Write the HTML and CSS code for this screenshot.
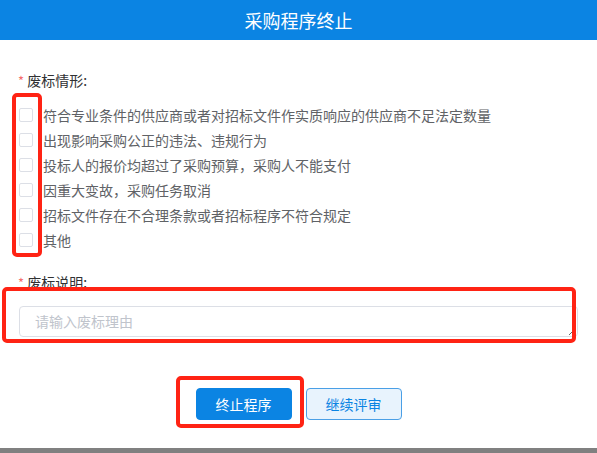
FILE: index.html
```html
<!DOCTYPE html>
<html lang="zh-CN">
<head>
    <meta charset="UTF-8">
    <meta name="viewport" content="width=device-width, initial-scale=1.0">
    <title>采购程序终止</title>
    <link rel="stylesheet" href="styles.css">
</head>
<body>

    <div class="dialog">
        <div class="dialog-header">采购程序终止</div>

        <form class="dialog-body" id="terminar">
            <div class="form-label"><span class="required">*</span> 废标情形:</div>
            <div class="check-group">
                <label class="check-row"><span class="check-box"></span>符合专业条件的供应商或者对招标文件作实质响应的供应商不足法定数量</label>
                <label class="check-row"><span class="check-box"></span>出现影响采购公正的违法、违规行为</label>
                <label class="check-row"><span class="check-box"></span>投标人的报价均超过了采购预算，采购人不能支付</label>
                <label class="check-row"><span class="check-box"></span>因重大变故，采购任务取消</label>
                <label class="check-row"><span class="check-box"></span>招标文件存在不合理条款或者招标程序不符合规定</label>
                <label class="check-row"><span class="check-box"></span>其他</label>
            </div>

            <div class="form-label second"><span class="required">*</span> 废标说明:</div>
            <textarea class="reason" placeholder="请输入废标理由"></textarea>

            <div class="buttons">
                <button type="button" class="btn btn-primary">终止程序</button>
                <button type="button" class="btn btn-plain">继续评审</button>
            </div>
        </form>

        <!-- marcas rojas -->
        <div class="mark mark-checks"></div>
        <div class="mark mark-text"></div>
        <div class="mark mark-btn"></div>
    </div>

</body>
</html>
```

FILE: styles.css
```css
body {
    margin: 0;
    background-color: #808080;
    font-family: "Noto Sans CJK SC", "Liberation Sans", sans-serif;
}
.dialog {
    position: relative;
    height: 448px;
    background-color: #fff;
    box-shadow: 0 1px 3px rgba(0, 0, 0, 0.4);
}
.dialog-header {
    height: 40px;
    line-height: 40px;
    text-align: center;
    background-color: #0b84e3;
    color: #fff;
    font-size: 18px;
}
.dialog-body {
    padding: 30px 0 0 18px;
    margin: 0;
}
.form-label {
    height: 20px;
    line-height: 20px;
    font-size: 14px;
    color: #303133;
}
.form-label.second {
    margin-top: 20px;
}
.required {
    color: #f56c6c;
    font-size: 13px;
}
.check-group {
    display: flex;
    flex-direction: column;
    margin-top: 12px;
}
.check-row {
    display: flex;
    align-items: center;
    height: 25px;
    font-size: 14px;
    color: #606266;
}
.check-box {
    width: 12px;
    height: 12px;
    margin: 0 10px 0 1px;
    border: 1px solid #dcdfe6;
    border-radius: 2px;
    background-color: #fff;
}
.reason {
    display: block;
    box-sizing: border-box;
    width: 559px;
    height: 31px;
    margin: 14px 0 0 1px;
    padding: 5px 15px;
    border: 1px solid #dcdfe6;
    border-radius: 4px;
    font-family: inherit;
    font-size: 14px;
    line-height: 19px;
    color: #606266;
    resize: vertical;
}
.reason::placeholder {
    color: #c0c4cc;
}
.buttons {
    display: flex;
    justify-content: center;
    gap: 14px;
    margin: 51px 0 0 -18px;
}
.btn {
    width: 96px;
    height: 32px;
    border-radius: 4px;
    font-family: inherit;
    font-size: 14px;
    cursor: pointer;
}
.btn-primary {
    border: 1px solid #0b84e3;
    background-color: #0b84e3;
    color: #fff;
}
.btn-plain {
    border: 1px solid #4a9fe6;
    background-color: #e8f3fd;
    color: #0b84e3;
}
.mark {
    position: absolute;
    box-sizing: border-box;
    border: 4px solid #ff2314;
    border-radius: 5px;
}
.mark-checks {
    left: 12px;
    top: 93px;
    width: 30px;
    height: 164px;
}
.mark-text {
    left: 2px;
    top: 287px;
    width: 574px;
    height: 56px;
}
.mark-btn {
    left: 176px;
    top: 376px;
    width: 128px;
    height: 52px;
}
```
